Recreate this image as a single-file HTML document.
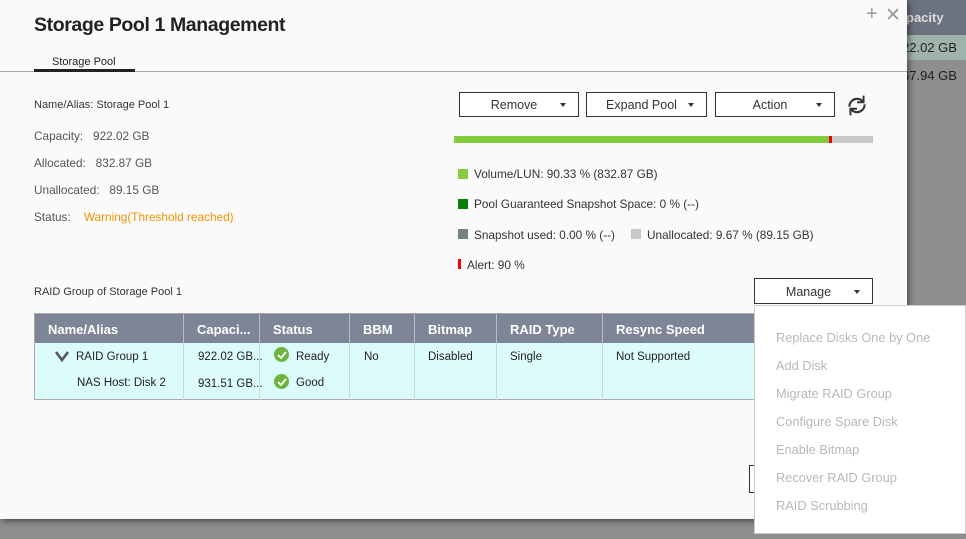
<!DOCTYPE html>
<html><head><meta charset="utf-8"><style>
*{margin:0;padding:0;box-sizing:border-box}
body{width:966px;height:539px;overflow:hidden;background:#8e8e8e;font-family:"Liberation Sans",sans-serif;position:relative;color:#333}
.a{position:absolute;white-space:nowrap}
.dlg{position:absolute;left:0;top:0;width:907px;height:519px;background:#fafafa;box-shadow:2px 2px 6px rgba(0,0,0,.5)}
.btn{position:absolute;height:25px;border:1px solid #333;background:#fff;font-size:12.5px;color:#333;text-align:center;line-height:23px}
.btn i{position:absolute;right:12px;top:10px;border-left:3px solid transparent;border-right:3px solid transparent;border-top:4px solid #333}
.lt{font-size:11.8px;color:#555}
.sq{position:absolute;width:10px;height:10px}
.th{position:absolute;top:0;height:29px;line-height:31px;color:#fff;font-size:13px;font-weight:bold;padding-left:13px;border-right:1px solid #b8bec8}
.td{font-size:11.5px;color:#222}
.mi{position:absolute;left:21px;font-size:12.8px;color:#b8b8b8}
.ck{position:absolute;width:15px;height:15px;border-radius:50%;background:#6db33f}
</style></head><body>
<div class="a" style="left:907px;top:0;width:59px;height:35px;background:#6b7280"></div>
<div class="a" style="left:907px;top:35px;width:59px;height:25px;background:#9fb2ad"></div>
<div class="a" style="left:906px;top:10px;font-size:13px;color:#ddd;font-weight:bold">pacity</div>
<div class="a" style="left:902px;top:40px;font-size:13px;color:#222">22.02 GB</div>
<div class="a" style="left:902px;top:68px;font-size:13px;color:#222">67.94 GB</div>
<div class="dlg">
<div class="a" style="left:34px;top:14px;font-size:19.5px;font-weight:bold;color:#222;letter-spacing:-0.4px">Storage Pool 1 Management</div>
<div class="a" style="left:866px;top:3px;font-size:20px;color:#999;font-weight:300">+</div>
<div class="a" style="left:885px;top:4px;font-size:19px;color:#999">✕</div>
<div class="a" style="left:52px;top:56px;font-size:11px;color:#222">Storage Pool</div>
<div class="a" style="left:0;top:71px;width:907px;height:1px;background:#aaa"></div>
<div class="a" style="left:34px;top:69px;width:101px;height:3px;background:#222"></div>
<div class="a" style="left:34px;top:99px;font-size:11px;color:#333">Name/Alias: Storage Pool 1</div>
<div class="a lt" style="left:34px;top:129px">Capacity:&nbsp;&nbsp;&nbsp;922.02 GB</div>
<div class="a lt" style="left:34px;top:156px">Allocated:&nbsp;&nbsp;&nbsp;832.87 GB</div>
<div class="a lt" style="left:34px;top:183px">Unallocated:&nbsp;&nbsp;&nbsp;89.15 GB</div>
<div class="a lt" style="left:34px;top:210px">Status:&nbsp;&nbsp;&nbsp;&nbsp;<span style="color:#f39200">Warning(Threshold reached)</span></div>
<div class="btn" style="left:459px;top:92px;width:120px;padding-right:10px;line-height:24px">Remove<i></i></div>
<div class="btn" style="left:586px;top:92px;width:121px;padding-right:10px;line-height:24px">Expand Pool<i></i></div>
<div class="btn" style="left:715px;top:92px;width:120px;padding-right:10px;line-height:24px">Action<i></i></div>
<svg class="a" style="left:845px;top:93px" width="24" height="25" viewBox="0 0 22 22" fill="none" stroke="#333" stroke-width="2"><path d="M4 12a7 7 0 0 1 12-5"/><path d="M18 10a7 7 0 0 1-12 5"/><path d="M17 2v6h-6" stroke-width="1.8"/><path d="M5 20v-6h6" stroke-width="1.8"/></svg>
<div class="a" style="left:454px;top:136px;width:375px;height:7px;background:#82cc3e"></div>
<div class="a" style="left:829px;top:136px;width:3px;height:7px;background:#e00"></div>
<div class="a" style="left:832px;top:136px;width:41px;height:7px;background:#c8c8c8"></div>
<div class="sq" style="left:458px;top:169px;background:#82cc3e"></div>
<div class="a lt" style="left:474px;top:167px;color:#333">Volume/LUN: 90.33 % (832.87 GB)</div>
<div class="sq" style="left:458px;top:199px;background:#0a7d0a"></div>
<div class="a lt" style="left:474px;top:197px;color:#333">Pool Guaranteed Snapshot Space: 0 % (--)</div>
<div class="sq" style="left:458px;top:229px;background:#758479"></div>
<div class="a lt" style="left:474px;top:228px;color:#333">Snapshot used: 0.00 % (--)</div>
<div class="sq" style="left:631px;top:229px;background:#c8c8c8"></div>
<div class="a lt" style="left:647px;top:228px;color:#333">Unallocated: 9.67 % (89.15 GB)</div>
<div class="a" style="left:458px;top:259px;width:3px;height:10px;background:#f00"></div>
<div class="a lt" style="left:467px;top:258px;color:#333">Alert: 90 %</div>
<div class="a" style="left:34px;top:286px;font-size:11px;color:#333">RAID Group of Storage Pool 1</div>
<div class="btn" style="left:754px;top:278px;width:119px;height:26px;padding-right:10px;line-height:26px">Manage<i style="top:11px"></i></div>
<div class="a" style="left:34px;top:313px;width:740px;height:87px;background:#dcfcfc;border:1px solid #aaa;border-right:none">
 <div class="a" style="left:0;top:0;width:740px;height:29px;background:#7e8596"></div>
 <div class="th" style="left:0;width:149px">Name/Alias</div>
 <div class="th" style="left:149px;width:76px">Capaci...</div>
 <div class="th" style="left:225px;width:90px">Status</div>
 <div class="th" style="left:315px;width:65px">BBM</div>
 <div class="th" style="left:380px;width:82px">Bitmap</div>
 <div class="th" style="left:462px;width:106px">RAID Type</div>
 <div class="th" style="left:568px;width:172px;border:none">Resync Speed</div>
 <div class="a" style="left:148px;top:29px;width:1px;height:57px;background:#c8d8d8"></div>
 <div class="a" style="left:224px;top:29px;width:1px;height:57px;background:#c8d8d8"></div>
 <div class="a" style="left:314px;top:29px;width:1px;height:57px;background:#c8d8d8"></div>
 <div class="a" style="left:379px;top:29px;width:1px;height:57px;background:#c8d8d8"></div>
 <div class="a" style="left:461px;top:29px;width:1px;height:57px;background:#c8d8d8"></div>
 <div class="a" style="left:567px;top:29px;width:1px;height:57px;background:#c8d8d8"></div>
 <svg class="a" style="left:20px;top:37px" width="14" height="11" viewBox="0 0 14 11"><path d="M1 1l6 8 6-8" stroke="#555" stroke-width="2.6" fill="none"/></svg>
 <div class="a td" style="left:41px;top:37px">RAID Group 1</div>
 <div class="a td" style="left:42px;top:63px">NAS Host: Disk 2</div>
 <div class="a td" style="left:163px;top:37px">922.02 GB...</div>
 <div class="a td" style="left:163px;top:64px">931.51 GB...</div>
 <div class="ck" style="left:239px;top:33px"></div>
 <svg class="a" style="left:242px;top:37px" width="10" height="8"><path d="M1 4l3 3 5-6" stroke="#fff" stroke-width="1.8" fill="none"/></svg>
 <div class="a td" style="left:261px;top:37px">Ready</div>
 <div class="ck" style="left:239px;top:60px"></div>
 <svg class="a" style="left:242px;top:64px" width="10" height="8"><path d="M1 4l3 3 5-6" stroke="#fff" stroke-width="1.8" fill="none"/></svg>
 <div class="a td" style="left:261px;top:63px">Good</div>
 <div class="a td" style="left:329px;top:37px">No</div>
 <div class="a td" style="left:393px;top:37px">Disabled</div>
 <div class="a td" style="left:475px;top:37px">Single</div>
 <div class="a td" style="left:581px;top:37px">Not Supported</div>
</div>
<div class="a" style="left:749px;top:465px;width:20px;height:28px;border:1px solid #333;border-right:none;background:#fff"></div>
</div>
<div class="a" style="left:754px;top:305px;width:212px;height:229px;background:#fff;border:1px solid #ccc">
 <div class="mi" style="top:24px">Replace Disks One by One</div>
 <div class="mi" style="top:52px">Add Disk</div>
 <div class="mi" style="top:80px">Migrate RAID Group</div>
 <div class="mi" style="top:108px">Configure Spare Disk</div>
 <div class="mi" style="top:136px">Enable Bitmap</div>
 <div class="mi" style="top:164px">Recover RAID Group</div>
 <div class="mi" style="top:192px">RAID Scrubbing</div>
</div>
</body></html>
